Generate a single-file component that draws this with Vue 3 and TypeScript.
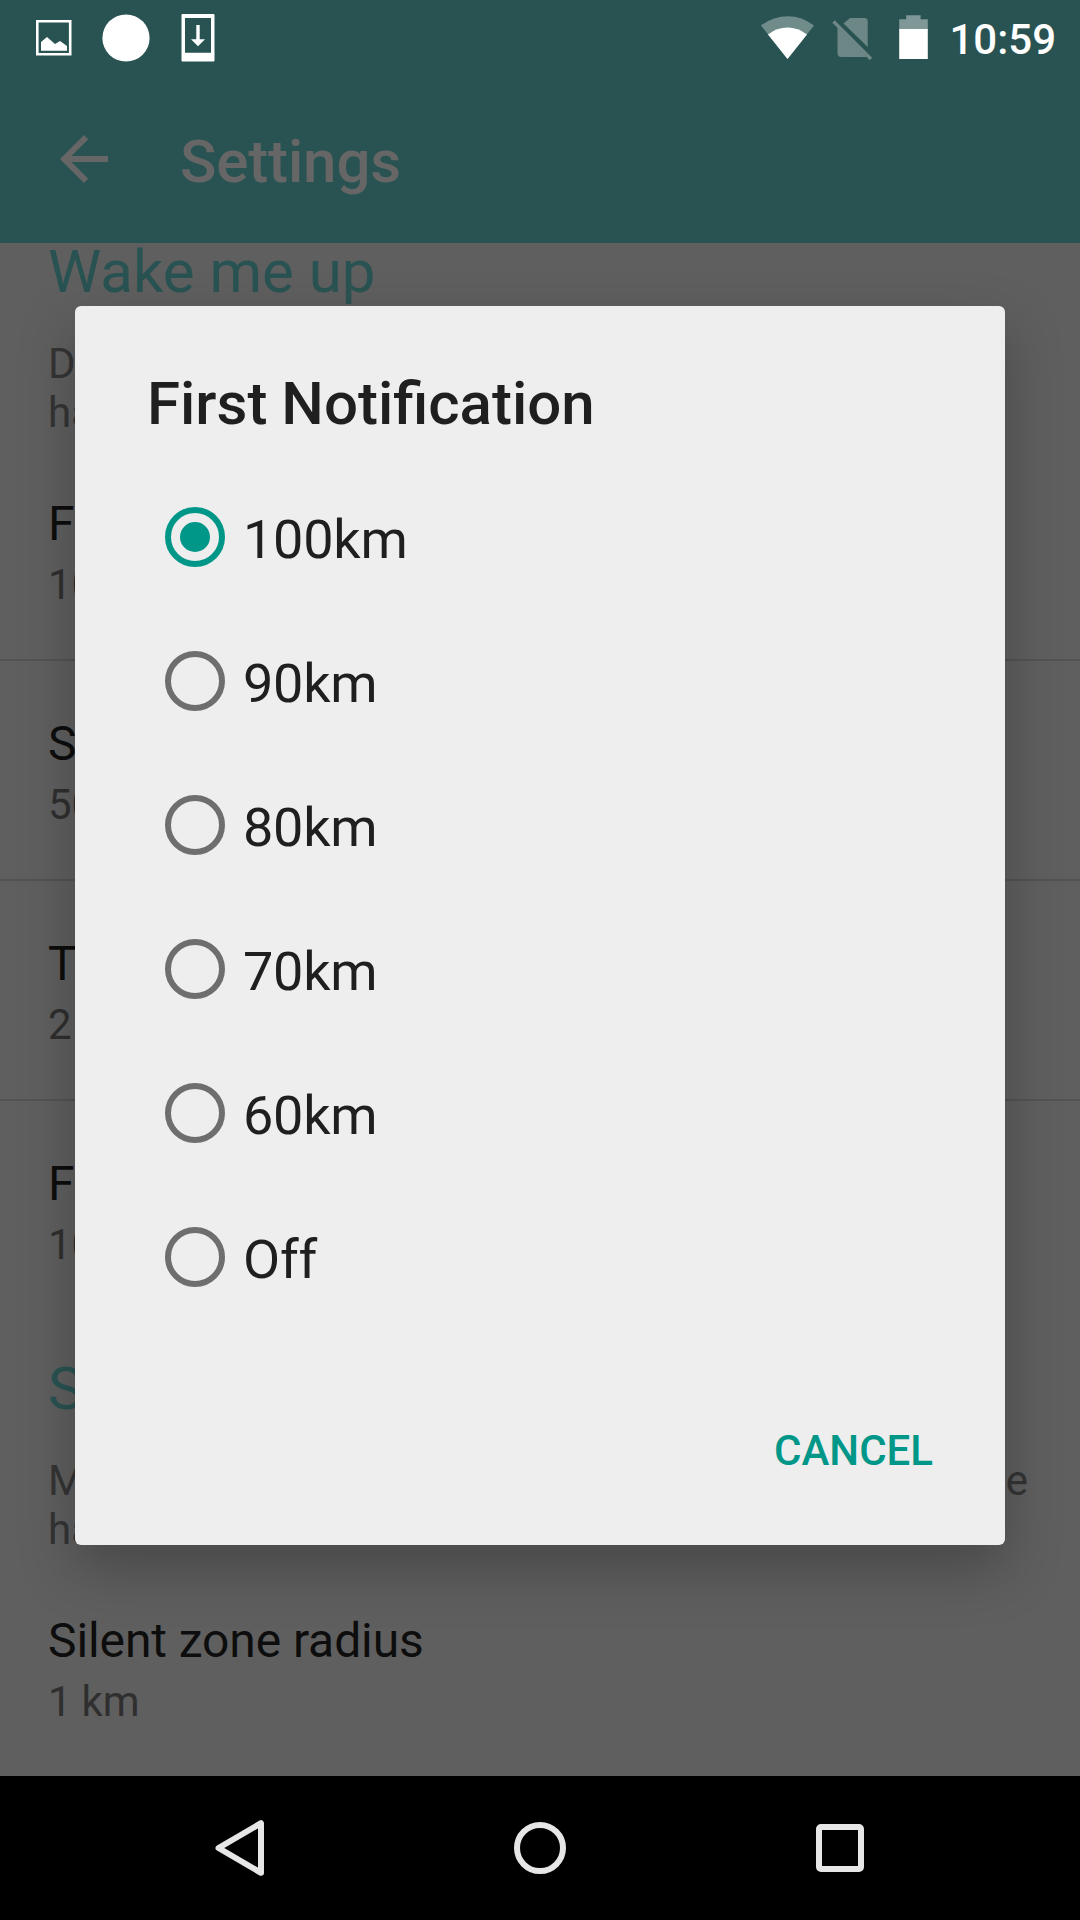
<script setup lang="ts">
import { ref } from 'vue'

interface Setting {
  title: string
  value: string
}

interface Section {
  heading: string
  description: string[]
  settings: Setting[]
}

const sections: Section[] = [
  {
    heading: 'Wake me up',
    description: ['Distance at which the notifications', 'have to be triggered'],
    settings: [
      { title: 'First Notification', value: '100km' },
      { title: 'Second Notification', value: '50km' },
      { title: 'Third Notification', value: '2 km' },
      { title: 'Final Notification', value: '10km' },
    ],
  },
  {
    heading: 'Silent zone',
    description: ['Mute notifications within this distance around the', 'have been started'],
    settings: [{ title: 'Silent zone radius', value: '1 km' }],
  },
]

const options: string[] = ['100km', '90km', '80km', '70km', '60km', 'Off']
const selected = ref<string>('100km')
</script>

<template>
  <div class="screen">
    <header class="top">
      <div class="status">
        <svg width="240" height="76" viewBox="0 0 240 76" fill="#fff">
          <path fill-rule="evenodd" d="M36 20h35.5v35.5H36zM38.6 22.6v30.3h30.3V22.6z" />
          <path d="M41 42l6-5 8 7 5-3 7 5v4.8H41z" />
          <circle cx="126" cy="38" r="23.6" />
          <path fill-rule="evenodd" d="M182.5 14h31q1 0 1 1v45.500q0 1-1 1h-31q-1 0-1-1V15q0-1 1-1zM185 18v34.700h26V18z" />
          <path d="M196.300 25h3.400v14.300h5.300l-7 7-7-7h5.300z" />
        </svg>
        <div class="status-right">
          <svg width="180" height="76" viewBox="755 0 180 76">
            <path fill="#6f8c8b" d="M787.500 59L761 25.500Q773 16.200 787.500 16.200T814 25.500z" />
            <path fill="#fff" d="M787.500 59L768 34.500Q777 27.600 787.500 27.600T807 34.500z" />
            <path fill="#6c8786" d="M850 18h14.500q3.200 0 3.200 3.200V47L843.500 23.500zM837.500 27.500L866.500 56.500q-.8.500-2 .5H841.500q-4 0-4-4z" />
            <path stroke="#6c8786" stroke-width="3.400" d="M833.500 21.500L871 59" />
            <path fill="#7f9897" d="M899.200 29V19.300h7V15.200h14.400v4.100h7.200V29z" />
            <path fill="#fff" d="M899.200 29h28.600v30h-28.600z" />
          </svg>
          <span class="clock">10:59</span>
        </div>
      </div>
      <div class="toolbar">
        <svg width="72" height="72" viewBox="0 0 24 24" fill="#666">
          <path d="M20 11H7.830l5.590-5.590L12 4l-8 8 8 8 1.410-1.410L7.830 13H20v-2z" />
        </svg>
        <h1>Settings</h1>
      </div>
    </header>

    <main class="content">
      <section v-for="section in sections" :key="section.heading" class="section">
        <h2>{{ section.heading }}</h2>
        <p class="description">
          <span v-for="line in section.description" :key="line">{{ line }}</span>
        </p>
        <div v-for="item in section.settings" :key="item.title" class="setting">
          <div class="setting-title">{{ item.title }}</div>
          <div class="setting-value">{{ item.value }}</div>
        </div>
      </section>
    </main>

    <nav class="navbar">
      <svg width="1080" height="144" viewBox="0 1776 1080 144" fill="none" stroke="#e6e6e6" stroke-width="6" stroke-linejoin="round">
        <path d="M218.500 1848L261 1823.200V1872.800z" />
        <circle cx="540" cy="1848" r="23" />
        <rect x="819" y="1827" width="42" height="42" rx="2" />
      </svg>
    </nav>

    <div class="dialog" role="dialog">
      <h3>First Notification</h3>
      <div class="options">
        <div v-for="option in options" :key="option" class="option" @click="selected = option">
          <span class="radio" :class="{ checked: option === selected }"></span>
          <span class="label">{{ option }}</span>
        </div>
      </div>
      <div class="actions"><span class="cancel">CANCEL</span></div>
    </div>
  </div>
</template>

<style>
body {
  margin: 0;
  background: #000;
}
</style>

<style scoped>
.screen {
  position: relative;
  display: flex;
  flex-direction: column;
  width: 1080px;
  height: 1920px;
  overflow: hidden;
  background: #5f5f5f;
  font-family: Roboto, 'Liberation Sans', sans-serif;
}
h1,
h2,
h3,
p {
  margin: 0;
}
.top {
  flex: none;
  height: 243px;
  background: #295352;
}
.status {
  display: flex;
  justify-content: space-between;
  height: 76px;
}
.status-right {
  display: flex;
  gap: 14px;
  padding-right: 24px;
}
.clock {
  font-size: 42px;
  font-weight: 500;
  line-height: 79px;
  color: #fff;
}
.toolbar {
  display: flex;
  align-items: center;
  height: 166px;
  padding-left: 48px;
}
.toolbar h1 {
  margin-left: 60px;
  padding-top: 5px;
  font-size: 60px;
  font-weight: 500;
  line-height: 70px;
  letter-spacing: -0.12px;
  color: #666;
}
.content {
  flex: 1;
  min-height: 0;
}
.section + .section {
  padding-top: 39px;
}
h2 {
  box-sizing: border-box;
  height: 96px;
  padding-left: 48px;
  font-size: 60px;
  font-weight: 400;
  line-height: 58px;
  color: #295352;
}
.description {
  display: flex;
  flex-direction: column;
  width: 984px;
  margin: 0 48px 4px;
  font-size: 42px;
  line-height: 49px;
  color: #343434;
}
.section + .section .description span:first-child {
  width: 980px;
  text-align: justify;
  text-align-last: justify;
}
.setting {
  box-sizing: border-box;
  height: 220px;
  padding: 55px 48px 0;
  border-bottom: 2px solid #535353;
}
.setting:last-child {
  border-bottom: 0;
}
.setting-title {
  font-size: 48px;
  line-height: 56px;
  letter-spacing: -0.1px;
  color: #0d0d0d;
}
.setting-value {
  margin-top: 8px;
  font-size: 42px;
  line-height: 49px;
  letter-spacing: -0.2px;
  color: #2f2f2f;
}
.navbar {
  flex: none;
  height: 144px;
  background: #000;
}
.navbar svg {
  display: block;
}
.dialog {
  position: absolute;
  top: 306px;
  left: 75px;
  display: flex;
  flex-direction: column;
  box-sizing: border-box;
  width: 930px;
  height: 1239px;
  padding: 63px 72px 0;
  border-radius: 6px;
  background: #eee;
  box-shadow: 0 24px 56px rgba(0, 0, 0, 0.25);
}
.dialog h3 {
  font-size: 60px;
  font-weight: 500;
  line-height: 70px;
  word-spacing: -1px;
  color: #1f1f1f;
}
.options {
  margin-top: 26px;
}
.option {
  display: flex;
  align-items: center;
  height: 144px;
  padding-left: 18px;
}
.radio {
  display: flex;
  align-items: center;
  justify-content: center;
  box-sizing: border-box;
  width: 60px;
  height: 60px;
  border: 6px solid #6e6e6e;
  border-radius: 50%;
}
.radio.checked {
  border-color: #009788;
}
.radio.checked::after {
  content: '';
  width: 30px;
  height: 30px;
  border-radius: 50%;
  background: #009788;
}
.label {
  margin-left: 18px;
  padding-top: 5px;
  font-size: 54px;
  line-height: 64px;
  letter-spacing: -0.25px;
  color: #1f1f1f;
}
.actions {
  display: flex;
  justify-content: flex-end;
  margin-top: 97px;
}
.cancel {
  font-size: 42px;
  font-weight: 500;
  line-height: 50px;
  color: #009788;
}
</style>
